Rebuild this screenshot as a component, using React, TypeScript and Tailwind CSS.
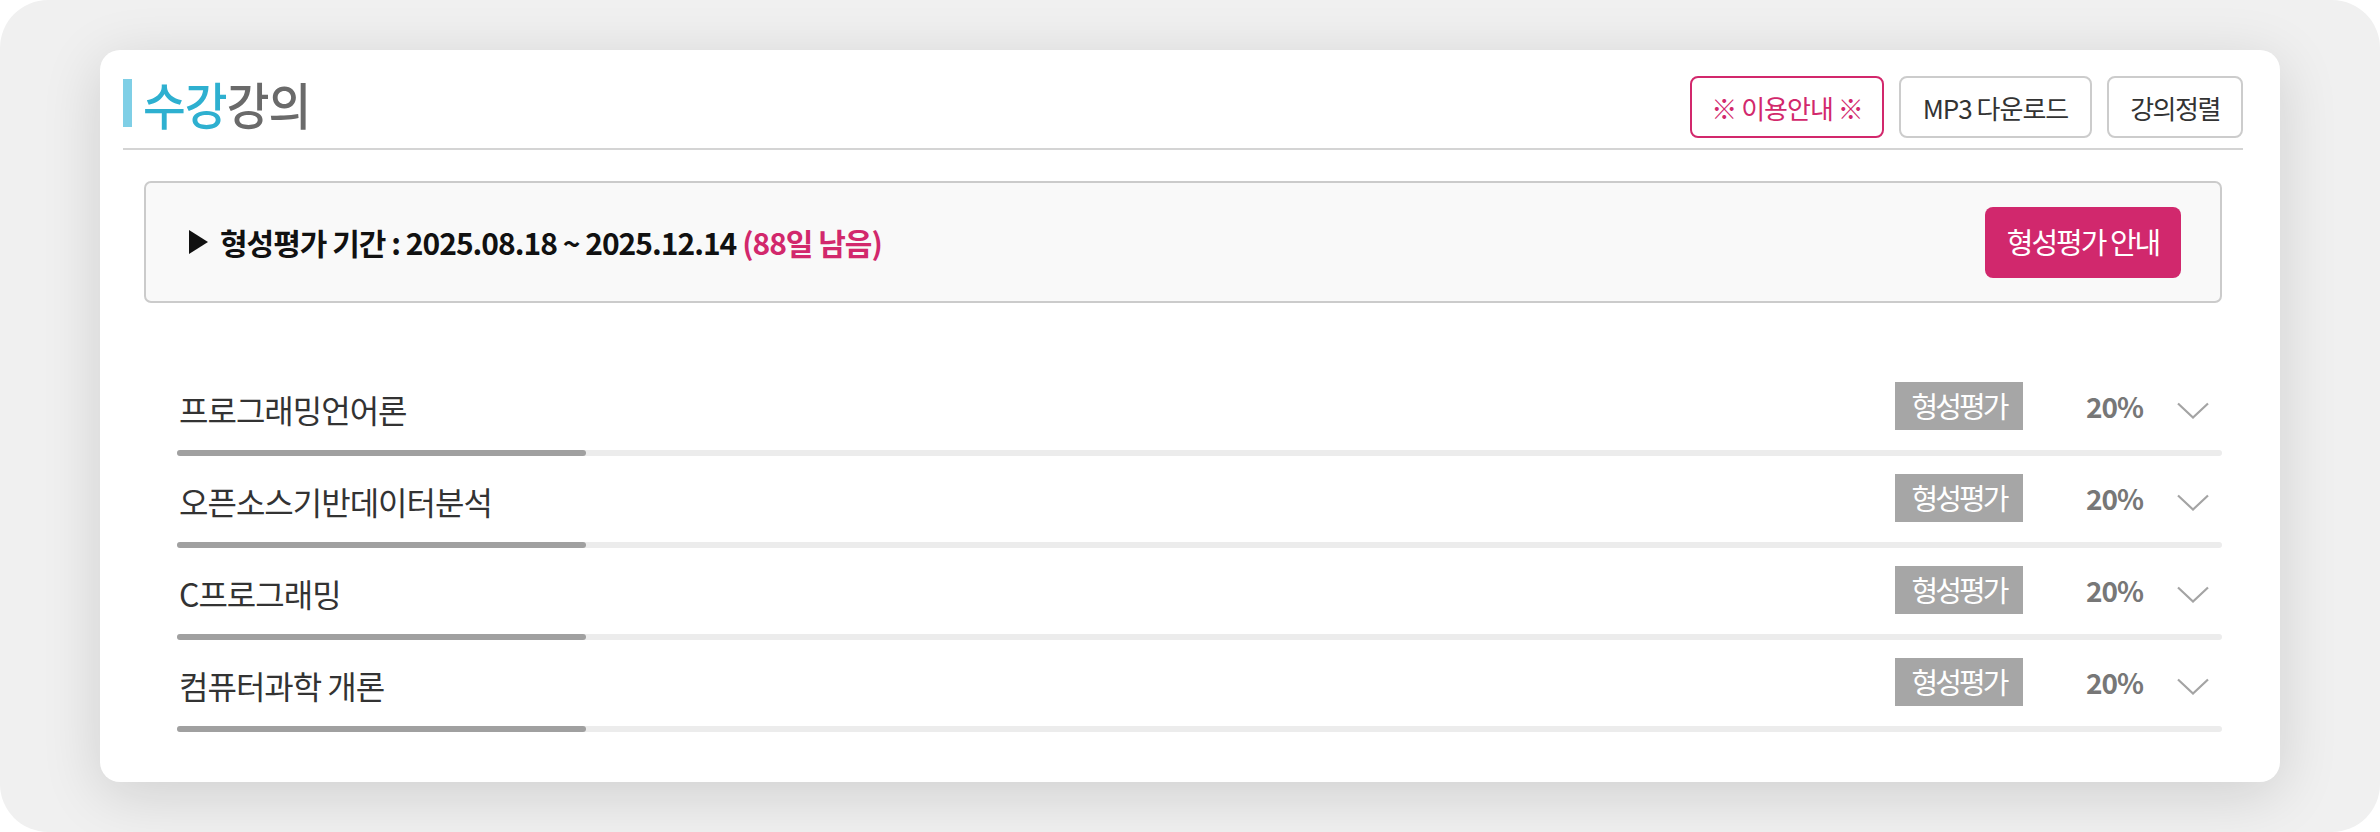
import React from 'react';

const courses = ['프로그래밍언어론', '오픈소스기반데이터분석', 'C프로그래밍', '컴퓨터과학 개론'];

function Chevron() {
  return (
    <svg width="32" height="17" viewBox="0 0 32 17" className="ml-[34px] mr-[13px] mt-[9px] shrink-0">
      <polyline points="1,1.5 16,15.5 31,1.5" fill="none" stroke="#a4a4a4" strokeWidth="2.2" />
    </svg>
  );
}

export default function App() {
  return (
    <div className="w-[2380px] h-[832px] bg-white font-[family-name:'Noto_Sans_CJK_KR','Noto_Sans',sans-serif]">
      <div className="w-full h-full rounded-[48px] bg-[#f0f0f0] px-[100px] pt-[50px] pb-[50px]">
        <div className="h-[732px] bg-white rounded-[20px] shadow-[0_12px_60px_rgba(0,0,0,0.14)] pl-[23px] pr-[37px] pt-[26px]">
          {/* header */}
          <div className="flex items-center justify-between pb-[10px] border-b-2 border-[#d4d4d4]">
            <div className="flex items-center mb-[9px]">
              <div className="w-[9px] h-[48px] bg-[#7fcfe6]" />
              <div className="ml-[11px] text-[50px] leading-none font-medium origin-left scale-x-[0.93] tracking-[-1px]">
                <span className="text-[#2eb0d0]">수강</span>
                <span className="text-[#6a6a6a]">강의</span>
              </div>
            </div>
            <div className="flex items-center gap-[15px]">
              <div className="w-[194px] h-[62px] rounded-[8px] border-2 border-[#d2286c] flex items-center justify-center text-[26px] text-[#d2286c] tracking-[-1px]">
                ※ 이용안내 ※
              </div>
              <div className="w-[193px] h-[62px] rounded-[8px] border-2 border-[#cccccc] flex items-center justify-center text-[26px] text-[#333] tracking-[-1px]">
                MP3 다운로드
              </div>
              <div className="w-[136px] h-[62px] rounded-[8px] border-2 border-[#cccccc] flex items-center justify-center text-[26px] text-[#333] tracking-[-1.5px]">
                강의정렬
              </div>
            </div>
          </div>

          <div className="px-[21px]">
            {/* info box */}
            <div className="mt-[31px] h-[122px] rounded-[7px] border-2 border-[#cbcbcb] bg-[#f9f9f9] flex items-center justify-between pl-[43px] pr-[39px]">
              <div className="flex items-center">
                <svg width="19" height="24" viewBox="0 0 19 24" className="shrink-0">
                  <polygon points="0,0 19,12 0,24" fill="#111" />
                </svg>
                <span className="ml-[12px] text-[30px] font-bold text-[#111] tracking-[-1px] leading-none">
                  형성평가 기간 : 2025.08.18 ~ 2025.12.14 <span className="text-[#d2286c]">(88일 남음)</span>
                </span>
              </div>
              <div className="w-[196px] h-[71px] rounded-[8px] bg-[#d1286d] flex items-center justify-center text-white text-[29px] tracking-[-2px]">
                형성평가 안내
              </div>
            </div>

            {/* rows */}
            <div className="mt-[61px] pl-[33px]">
              {courses.map((c) => (
                <div key={c} className="pt-[18px]">
                  <div className="flex items-center h-[48px]">
                    <span className="flex-1 pl-[2px] text-[32px] tracking-[-1px] text-[#333] leading-none mt-[6px]">{c}</span>
                    <span className="w-[128px] h-[48px] bg-[#a6a6a6] text-white text-[29px] tracking-[-3px] flex items-center justify-center shrink-0">
                      형성평가
                    </span>
                    <span className="ml-[63px] text-[28px] font-bold text-[#777] tracking-[-1px] leading-none">20%</span>
                    <Chevron />
                  </div>
                  <div className="mt-[20px] h-[6px] rounded-full bg-[#ececec]">
                    <div className="h-full w-[20%] rounded-full bg-[#a0a0a0]" />
                  </div>
                </div>
              ))}
            </div>
          </div>
        </div>
      </div>
    </div>
  );
}
